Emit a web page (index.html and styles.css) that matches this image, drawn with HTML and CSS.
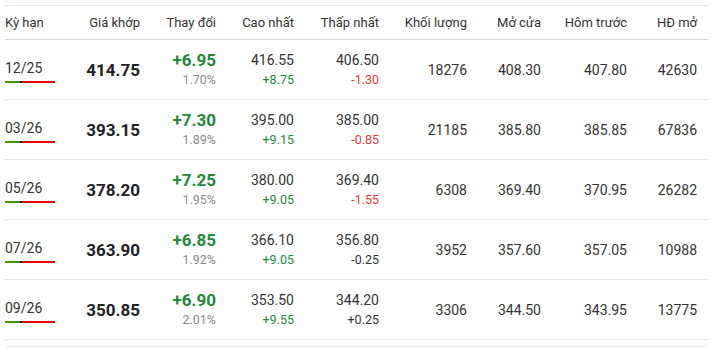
FILE: index.html
```html
<!DOCTYPE html>
<html lang="vi">
<head>
  <meta charset="UTF-8">
  <meta name="viewport" content="width=device-width, initial-scale=1.0">
  <title>Giá kỳ hạn</title>
  <link rel="stylesheet" href="styles.css">
</head>
<body>
  <table class="quotes">
    <colgroup>
      <col class="c-term">
      <col class="c-match">
      <col class="c-change">
      <col class="c-high">
      <col class="c-low">
      <col class="c-vol">
      <col class="c-open">
      <col class="c-prev">
      <col class="c-oi">
    </colgroup>
    <thead>
      <tr>
        <th class="left">Kỳ hạn</th>
        <th>Giá khớp</th>
        <th>Thay đổi</th>
        <th>Cao nhất</th>
        <th>Thấp nhất</th>
        <th>Khối lượng</th>
        <th>Mở cửa</th>
        <th>Hôm trước</th>
        <th>HĐ mở</th>
      </tr>
    </thead>
    <tbody>
      <tr>
        <td class="left"><span class="term">12/25</span><span class="bar"></span></td>
        <td class="price">414.75</td>
        <td><span class="chg up">+6.95</span><span class="pct">1.70%</span></td>
        <td><span class="val">416.55</span><span class="sub up">+8.75</span></td>
        <td><span class="val">406.50</span><span class="sub down">-1.30</span></td>
        <td>18276</td>
        <td>408.30</td>
        <td>407.80</td>
        <td>42630</td>
      </tr>
      <tr>
        <td class="left"><span class="term">03/26</span><span class="bar"></span></td>
        <td class="price">393.15</td>
        <td><span class="chg up">+7.30</span><span class="pct">1.89%</span></td>
        <td><span class="val">395.00</span><span class="sub up">+9.15</span></td>
        <td><span class="val">385.00</span><span class="sub down">-0.85</span></td>
        <td>21185</td>
        <td>385.80</td>
        <td>385.85</td>
        <td>67836</td>
      </tr>
      <tr>
        <td class="left"><span class="term">05/26</span><span class="bar"></span></td>
        <td class="price">378.20</td>
        <td><span class="chg up">+7.25</span><span class="pct">1.95%</span></td>
        <td><span class="val">380.00</span><span class="sub up">+9.05</span></td>
        <td><span class="val">369.40</span><span class="sub down">-1.55</span></td>
        <td>6308</td>
        <td>369.40</td>
        <td>370.95</td>
        <td>26282</td>
      </tr>
      <tr>
        <td class="left"><span class="term">07/26</span><span class="bar"></span></td>
        <td class="price">363.90</td>
        <td><span class="chg up">+6.85</span><span class="pct">1.92%</span></td>
        <td><span class="val">366.10</span><span class="sub up">+9.05</span></td>
        <td><span class="val">356.80</span><span class="sub">-0.25</span></td>
        <td>3952</td>
        <td>357.60</td>
        <td>357.05</td>
        <td>10988</td>
      </tr>
      <tr>
        <td class="left"><span class="term">09/26</span><span class="bar"></span></td>
        <td class="price">350.85</td>
        <td><span class="chg up">+6.90</span><span class="pct">2.01%</span></td>
        <td><span class="val">353.50</span><span class="sub up">+9.55</span></td>
        <td><span class="val">344.20</span><span class="sub">+0.25</span></td>
        <td>3306</td>
        <td>344.50</td>
        <td>343.95</td>
        <td>13775</td>
      </tr>
    </tbody>
  </table>
  <div class="footer-band"></div>
</body>
</html>
```

FILE: styles.css
```css
* {
  margin: 0;
  padding: 0;
  box-sizing: border-box;
}
body {
  font-family: Roboto, "Liberation Sans", sans-serif;
  color: #333;
  background: #fff;
  padding: 5px 10px 0 5px;
}
.quotes {
  width: 703px;
  border-collapse: collapse;
  table-layout: fixed;
  border-top: 1px solid #e3e7ed;
}
.c-term { width: 70px; }
.c-match { width: 76px; }
.c-change { width: 76px; }
.c-high { width: 78px; }
.c-low { width: 85px; }
.c-vol { width: 88px; }
.c-open { width: 74px; }
.c-prev { width: 86px; }
.c-oi { width: 70px; }

.quotes th {
  height: 34px;
  font-size: 13px;
  font-weight: 400;
  color: #333;
  text-align: right;
  padding-right: 11px;
  border-bottom: 1px solid #cfd6df;
  white-space: nowrap;
}
.quotes td {
  height: 60px;
  font-size: 14px;
  text-align: right;
  padding-right: 11px;
  border-bottom: 1px solid #e3e7ed;
  vertical-align: middle;
  white-space: nowrap;
}
.quotes .left {
  text-align: left;
  padding-left: 0;
}
.term {
  display: block;
  line-height: 20px;
  padding-top: 2px;
}
.bar {
  display: block;
  width: 50px;
  height: 2px;
  margin-top: 3px;
  background: linear-gradient(to right, #3a9a0c 0 15px, #111 15px 17px, #e80000 17px);
}
.quotes .price {
  font-size: 17px;
  font-weight: 700;
  color: #222;
}
.chg {
  display: block;
  font-size: 17px;
  font-weight: 700;
  line-height: 20px;
}
.pct {
  display: block;
  font-size: 12.5px;
  color: #8a8a8a;
  line-height: 20px;
}
.val {
  display: block;
  line-height: 20px;
}
.sub {
  display: block;
  font-size: 12.5px;
  line-height: 20px;
  color: #333;
}
.up {
  color: #23893b;
}
.sub.down {
  color: #e53935;
}
.footer-band {
  width: 703px;
  height: 8px;
  margin-top: 5px;
  background: #f3f4f6;
}
```
